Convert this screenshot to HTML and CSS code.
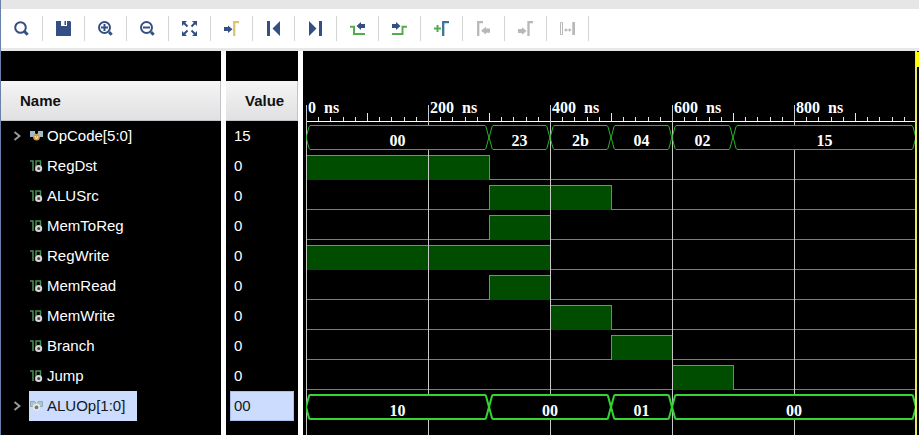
FILE: index.html
```html
<!DOCTYPE html>
<html lang="en">
<head>
<meta charset="utf-8">
<title>Waveform</title>
<link rel="stylesheet" href="styles.css">
</head>
<body>
<svg class="defs" aria-hidden="true">
  <symbol id="bus" viewBox="0 0 14 12">
    <path class="pads" d="M0 1h5v6H0zM8 1h5v6H8z"/><path class="pads" d="M4 2l2.500 2.500L9 2v4H4z"/>
    <circle class="badge" cx="6.500" cy="7.300" r="3.300"/><path class="mark" d="M5 6l1.500 3L8 6"/>
  </symbol>
  <symbol id="bus-internal" viewBox="0 0 14 12">
    <path d="M.5 1.500h4l2 2 2-2h4v5h-12z" fill="#a9c6cf" stroke="#8faab4"/>
    <circle cx="6.500" cy="7.300" r="2.800" fill="#777" stroke="#e4e8e4" stroke-width="1.800"/>
  </symbol>
  <symbol id="bit" viewBox="0 0 14 12">
    <path d="M0 1h3v10M6 11V1h4.500v5" fill="none" stroke="#4a8f52" stroke-width="1.500"/>
    <circle cx="8.700" cy="8.500" r="2.500" fill="#444" stroke="#d8d8d8" stroke-width="2"/>
  </symbol>
  <symbol id="open" viewBox="0 0 4 26"><path d="M4 .5L3 2 .2 12.500v1L3 24l1 1.500"/></symbol>
  <symbol id="close" viewBox="0 0 4 26"><path d="M0 .5L1 2l2.800 10.500v1L1 24l-1 1.500"/></symbol>
</svg>

<header class="toolbar">
  <button aria-label="Search"><svg viewBox="0 0 15 15"><circle cx="6.500" cy="6.500" r="5.300" class="line"/><path d="M10.500 10.500l3.200 3.200" class="thick"/></svg></button>
  <button aria-label="Save"><svg viewBox="0 0 15 15"><path class="blue" d="M0 0h5v5h6V0h3l1 1v14H0z"/><path class="blue" d="M8.500 0H10v4H8.500z"/></svg></button>
  <button aria-label="Zoom in"><svg viewBox="0 0 15 15"><circle cx="6.500" cy="6.500" r="5.500" class="line"/><path d="M3 6.500h7M6.500 3v7" class="line"/><path d="M11 11l2.700 2.700" class="thick"/></svg></button>
  <button aria-label="Zoom out"><svg viewBox="0 0 15 15"><circle cx="6.500" cy="6.500" r="5.500" class="line"/><path d="M3 6.500h7" class="line"/><path d="M11 11l2.700 2.700" class="thick"/></svg></button>
  <button aria-label="Zoom fit"><svg viewBox="0 0 15 15"><path class="blue" d="M0 0h5L0 5zM15 0v5l-5-5zM0 15v-5l5 5zM15 15h-5l5-5z"/><path class="line" d="M2 2l3.500 3.500M13 2L9.500 5.500M2 13l3.500-3.500M13 13L9.500 9.500"/></svg></button>
  <button aria-label="Go to cursor"><svg viewBox="0 0 15 15"><path class="blue" d="M0 6h4V4.500L8.500 8.200 4 12v-2H0z"/><path class="pulse yellow" d="M10.200 15V1.200H15"/></svg></button>
  <button aria-label="Go to start"><svg viewBox="0 0 15 15"><path class="blue" d="M1 0h3v15H1zM14 0v15L6.500 7.500z"/></svg></button>
  <button aria-label="Go to end"><svg viewBox="0 0 15 15"><path class="blue" d="M1 0v15l7.500-7.500zM11 0h3v15h-3z"/></svg></button>
  <button aria-label="Previous transition"><svg viewBox="0 0 15 15"><path class="pulse green" d="M0 5.800h4V13h11"/><path class="blue" d="M15 3h-4V1L6.500 5 11 9V7h4z"/></svg></button>
  <button aria-label="Next transition"><svg viewBox="0 0 15 15"><path class="pulse green" d="M0 13h10.500V5.800H15"/><path class="blue" d="M0 3h4V1l4.500 4L4 9V7H0z"/></svg></button>
  <button aria-label="Add marker"><svg viewBox="0 0 15 15"><path class="pulse green" d="M0 7.500h7M3.500 4v7"/><path class="pulse teal" d="M9.200 15V1.200H15"/></svg></button>
  <button aria-label="Previous marker" disabled><svg viewBox="0 0 15 15"><path class="pulse" d="M2.200 15V1.200H7"/><path class="grey" d="M14 7.500h-4V5.800L5 9.700l5 3.800v-1.700h4z"/></svg></button>
  <button aria-label="Next marker" disabled><svg viewBox="0 0 15 15"><path class="grey" d="M0 8h4V6.200l4.500 3.800L4 13.800V12H0z"/><path class="pulse" d="M10.500 15V1.200H15"/></svg></button>
  <button aria-label="Swap cursors" disabled><svg viewBox="0 0 15 15"><path class="grey" d="M12.300 1H15v13h-2.700zM4 9l2.500-2v1.500H9V7l2.500 2L9 11V9.500H6.500V11z"/><path d="M.5 1.500h2v12h-2z" fill="none" stroke="#b8b8b8"/></svg></button>
</header>

<main class="viewer">
  <section class="signals">
    <table>
      <colgroup><col class="c-name"><col class="c-gutter"><col class="c-value"></colgroup>
      <thead><tr><th scope="col">Name</th><td></td><th scope="col">Value</th></tr></thead>
      <tbody>
        <tr><td><div class="name"><button class="expand" aria-label="Expand OpCode"><svg viewBox="0 0 8 10"><path d="M1.500 1l5 4-5 4"/></svg></button><span class="chip"><svg class="kind"><use href="#bus"/></svg>OpCode[5:0]</span></div></td><td></td><td><div class="value">15</div></td></tr>
        <tr><td><div class="name leaf"><span class="chip"><svg class="kind"><use href="#bit"/></svg>RegDst</span></div></td><td></td><td><div class="value">0</div></td></tr>
        <tr><td><div class="name leaf"><span class="chip"><svg class="kind"><use href="#bit"/></svg>ALUSrc</span></div></td><td></td><td><div class="value">0</div></td></tr>
        <tr><td><div class="name leaf"><span class="chip"><svg class="kind"><use href="#bit"/></svg>MemToReg</span></div></td><td></td><td><div class="value">0</div></td></tr>
        <tr><td><div class="name leaf"><span class="chip"><svg class="kind"><use href="#bit"/></svg>RegWrite</span></div></td><td></td><td><div class="value">0</div></td></tr>
        <tr><td><div class="name leaf"><span class="chip"><svg class="kind"><use href="#bit"/></svg>MemRead</span></div></td><td></td><td><div class="value">0</div></td></tr>
        <tr><td><div class="name leaf"><span class="chip"><svg class="kind"><use href="#bit"/></svg>MemWrite</span></div></td><td></td><td><div class="value">0</div></td></tr>
        <tr><td><div class="name leaf"><span class="chip"><svg class="kind"><use href="#bit"/></svg>Branch</span></div></td><td></td><td><div class="value">0</div></td></tr>
        <tr><td><div class="name leaf"><span class="chip"><svg class="kind"><use href="#bit"/></svg>Jump</span></div></td><td></td><td><div class="value">0</div></td></tr>
        <tr class="selected"><td><div class="name"><button class="expand" aria-label="Expand ALUOp"><svg viewBox="0 0 8 10"><path d="M1.500 1l5 4-5 4"/></svg></button><span class="chip"><svg class="kind"><use href="#bus-internal"/></svg>ALUOp[1:0]</span></div></td><td></td><td><div class="value">00</div></td></tr>
      </tbody>
    </table>
  </section>

  <section class="wave" aria-label="Waveforms">
    <div class="ruler">
      <div class="major"><span class="time">0 <span>ns</span></span><div class="ticks"><i></i><i></i><i></i><i></i><i></i><i></i><i></i><i></i><i></i><i></i></div></div>
      <div class="major"><span class="time">200 <span>ns</span></span><div class="ticks"><i></i><i></i><i></i><i></i><i></i><i></i><i></i><i></i><i></i><i></i></div></div>
      <div class="major"><span class="time">400 <span>ns</span></span><div class="ticks"><i></i><i></i><i></i><i></i><i></i><i></i><i></i><i></i><i></i><i></i></div></div>
      <div class="major"><span class="time">600 <span>ns</span></span><div class="ticks"><i></i><i></i><i></i><i></i><i></i><i></i><i></i><i></i><i></i><i></i></div></div>
      <div class="major"><span class="time">800 <span>ns</span></span><div class="ticks"><i></i><i></i><i></i><i></i><i></i><i></i><i></i><i></i><i></i><i></i></div></div>
    </div>

    <div class="trace bus">
      <div class="seg t3"><svg><use href="#open"/></svg><b>00</b><svg><use href="#close"/></svg></div>
      <div class="seg t1"><svg><use href="#open"/></svg><b>23</b><svg><use href="#close"/></svg></div>
      <div class="seg t1"><svg><use href="#open"/></svg><b>2b</b><svg><use href="#close"/></svg></div>
      <div class="seg t1"><svg><use href="#open"/></svg><b>04</b><svg><use href="#close"/></svg></div>
      <div class="seg t1"><svg><use href="#open"/></svg><b>02</b><svg><use href="#close"/></svg></div>
      <div class="seg t3"><svg><use href="#open"/></svg><b>15</b><svg><use href="#close"/></svg></div>
    </div>
    <div class="trace"><div class="high t3"></div><div class="low t7"></div></div>
    <div class="trace"><div class="low t3"></div><div class="high t2"></div><div class="low t5"></div></div>
    <div class="trace"><div class="low t3"></div><div class="high t1"></div><div class="low t6"></div></div>
    <div class="trace"><div class="high t4"></div><div class="low t6"></div></div>
    <div class="trace"><div class="low t3"></div><div class="high t1"></div><div class="low t6"></div></div>
    <div class="trace"><div class="low t4"></div><div class="high t1"></div><div class="low t5"></div></div>
    <div class="trace"><div class="low t5"></div><div class="high t1"></div><div class="low t4"></div></div>
    <div class="trace"><div class="low t6"></div><div class="high t1"></div><div class="low t3"></div></div>
    <div class="trace bus active">
      <div class="seg t3"><svg><use href="#open"/></svg><b>10</b><svg><use href="#close"/></svg></div>
      <div class="seg t2"><svg><use href="#open"/></svg><b>00</b><svg><use href="#close"/></svg></div>
      <div class="seg t1"><svg><use href="#open"/></svg><b>01</b><svg><use href="#close"/></svg></div>
      <div class="seg t4"><svg><use href="#open"/></svg><b>00</b><svg><use href="#close"/></svg></div>
    </div>

    <div class="gridlines"><i></i><i></i><i></i><i></i><i></i></div>
    <div class="cursor"></div>
    <div class="flag"></div>
  </section>
</main>
</body>
</html>
```
FILE: styles.css
```css
* { box-sizing: border-box; }

body {
  margin: 0;
  min-height: 100vh;
  display: flex;
  flex-direction: column;
  border-left: 1px solid #6880ac;
  background: #000;
  color: #fff;
  font: 15px/20px "Liberation Sans", Arial, sans-serif;
}

button {
  padding: 0;
  border: 0;
  background: none;
}

.defs { position: absolute; width: 0; height: 0; }

/* Toolbar */
.toolbar {
  display: flex;
  align-items: center;
  height: 51px;
  border-top: 9px solid #e6e6e6;
  border-bottom: 3px solid #e8e8e8;
  background: #fff;
}
.toolbar button {
  display: flex;
  align-items: center;
  justify-content: center;
  width: 42px;
  height: 25px;
  border-right: 1px solid #d4d4d4;
}
.toolbar svg { width: 15px; height: 15px; overflow: visible; }
.blue { fill: #344f83; }
.grey { fill: #b8b8b8; }
.line { fill: none; stroke: #344f83; stroke-width: 2; }
.thick { fill: none; stroke: #344f83; stroke-width: 3; }
.pulse { fill: none; stroke: #b8b8b8; stroke-width: 2.300; }
.pulse.yellow { stroke: #dcc474; }
.pulse.green { stroke: #54ad4c; stroke-width: 2; }
.pulse.teal { stroke: #3b7399; }

/* Signal list */
.viewer { flex: 1; display: flex; }
.signals {
  flex: none;
  padding-top: 30px;
  border-right: 5px solid #fff;
  background: linear-gradient(#fff, #fff) 220px 0 / 5px 100% no-repeat;
}
table { border-collapse: collapse; table-layout: fixed; width: 297px; }
.c-name { width: 220px; }
.c-gutter { width: 5px; }
.c-value { width: 72px; }
th, td { padding: 0; }
th {
  height: 40px;
  padding-left: 19px;
  background: linear-gradient(#f5f5f5, #e0e0e2);
  box-shadow: inset -1px -1px #c4c4c8;
  color: #111;
  text-align: left;
}
tbody td { height: 30px; }
.name { display: flex; align-items: center; padding-left: 11px; }
.name.leaf { padding-left: 28px; }
.expand { display: flex; justify-content: center; width: 9px; margin-right: 8px; }
.expand svg { width: 8px; height: 10px; fill: none; stroke: #9a9a9a; stroke-width: 2; }
.chip {
  display: flex;
  align-items: center;
  height: 30px;
  padding: 0 12px 0 1px;
  gap: 3px;
}
.kind { width: 14px; height: 12px; }
.pads { fill: #9dbccb; }
.badge { fill: #d59a3d; }
.mark { fill: none; stroke: #fff0c8; }
.value { height: 30px; margin: 0 4px; padding: 0 4px; line-height: 30px; }
.selected .chip, .selected .value { background: #cbdcff; color: #15171c; }
.selected .value { box-shadow: inset 0 0 0 1px #a9c0ec; }

/* Waveforms */
.wave {
  position: relative;
  flex: 1;
  min-width: 0;
  padding: 0 3px;
  overflow: hidden;
}
.ruler {
  display: flex;
  height: 71px;
  border-bottom: 1px solid #fff;
}
.major {
  flex: 1;
  display: flex;
  flex-direction: column;
  justify-content: flex-end;
}
.time {
  height: 14px;
  padding-left: 2px;
  font: bold 16px/18px "Liberation Serif", "Times New Roman", serif;
}
.time span { margin-left: 4px; }
.ticks { display: flex; align-items: flex-end; height: 8px; }
.ticks i { flex: 1 1 0; height: 4px; box-shadow: inset 1px 0 #e8e8e8; }
.ticks i:nth-child(5n + 1) { height: 8px; }

.trace { display: flex; height: 30px; padding: 3px 0 2px; }
.t1 { flex: 1 1 0; }
.t2 { flex: 2 1 0; }
.t3 { flex: 3 1 0; }
.t4 { flex: 4 1 0; }
.t5 { flex: 5 1 0; }
.t6 { flex: 6 1 0; }
.t7 { flex: 7 1 0; }
.high { background: #004d00; box-shadow: inset 1px 1px #2cc22c; }
.low { box-shadow: inset 0 -1px #2cb62c; }
.high + .low { box-shadow: inset 1px -1px #2cb62c; }

.bus { position: relative; z-index: 2; color: #2cb62c; }
.seg { display: flex; min-width: 0; }
.seg svg { flex: none; width: 4px; height: 25px; overflow: visible; fill: none; stroke: currentColor; }
.seg b {
  flex: 1;
  padding-top: 7px;
  border: solid currentColor;
  border-width: 1px 0;
  background: #000;
  font: bold 16px/16px "Liberation Serif", "Times New Roman", serif;
  text-align: center;
  -webkit-text-fill-color: #fff;
}
.active { padding: 2px 0; color: #32d432; }
.active .seg b { border-width: 2px 0; }
.active .seg svg { height: 26px; stroke-width: 2; }

/* Overlays across every trace */
.gridlines {
  position: absolute;
  z-index: 1;
  inset: 54px 3px 0;
  display: flex;
}
.gridlines i { flex: 1; border-left: 1px solid #c8c8c8; }
.cursor {
  position: absolute;
  z-index: 3;
  inset: 0 2px 0 auto;
  width: 2px;
  background: #e8e860;
}
.flag {
  position: absolute;
  z-index: 3;
  top: 1px;
  right: 0;
  width: 3px;
  height: 15px;
  background: #ffff00;
}
```
